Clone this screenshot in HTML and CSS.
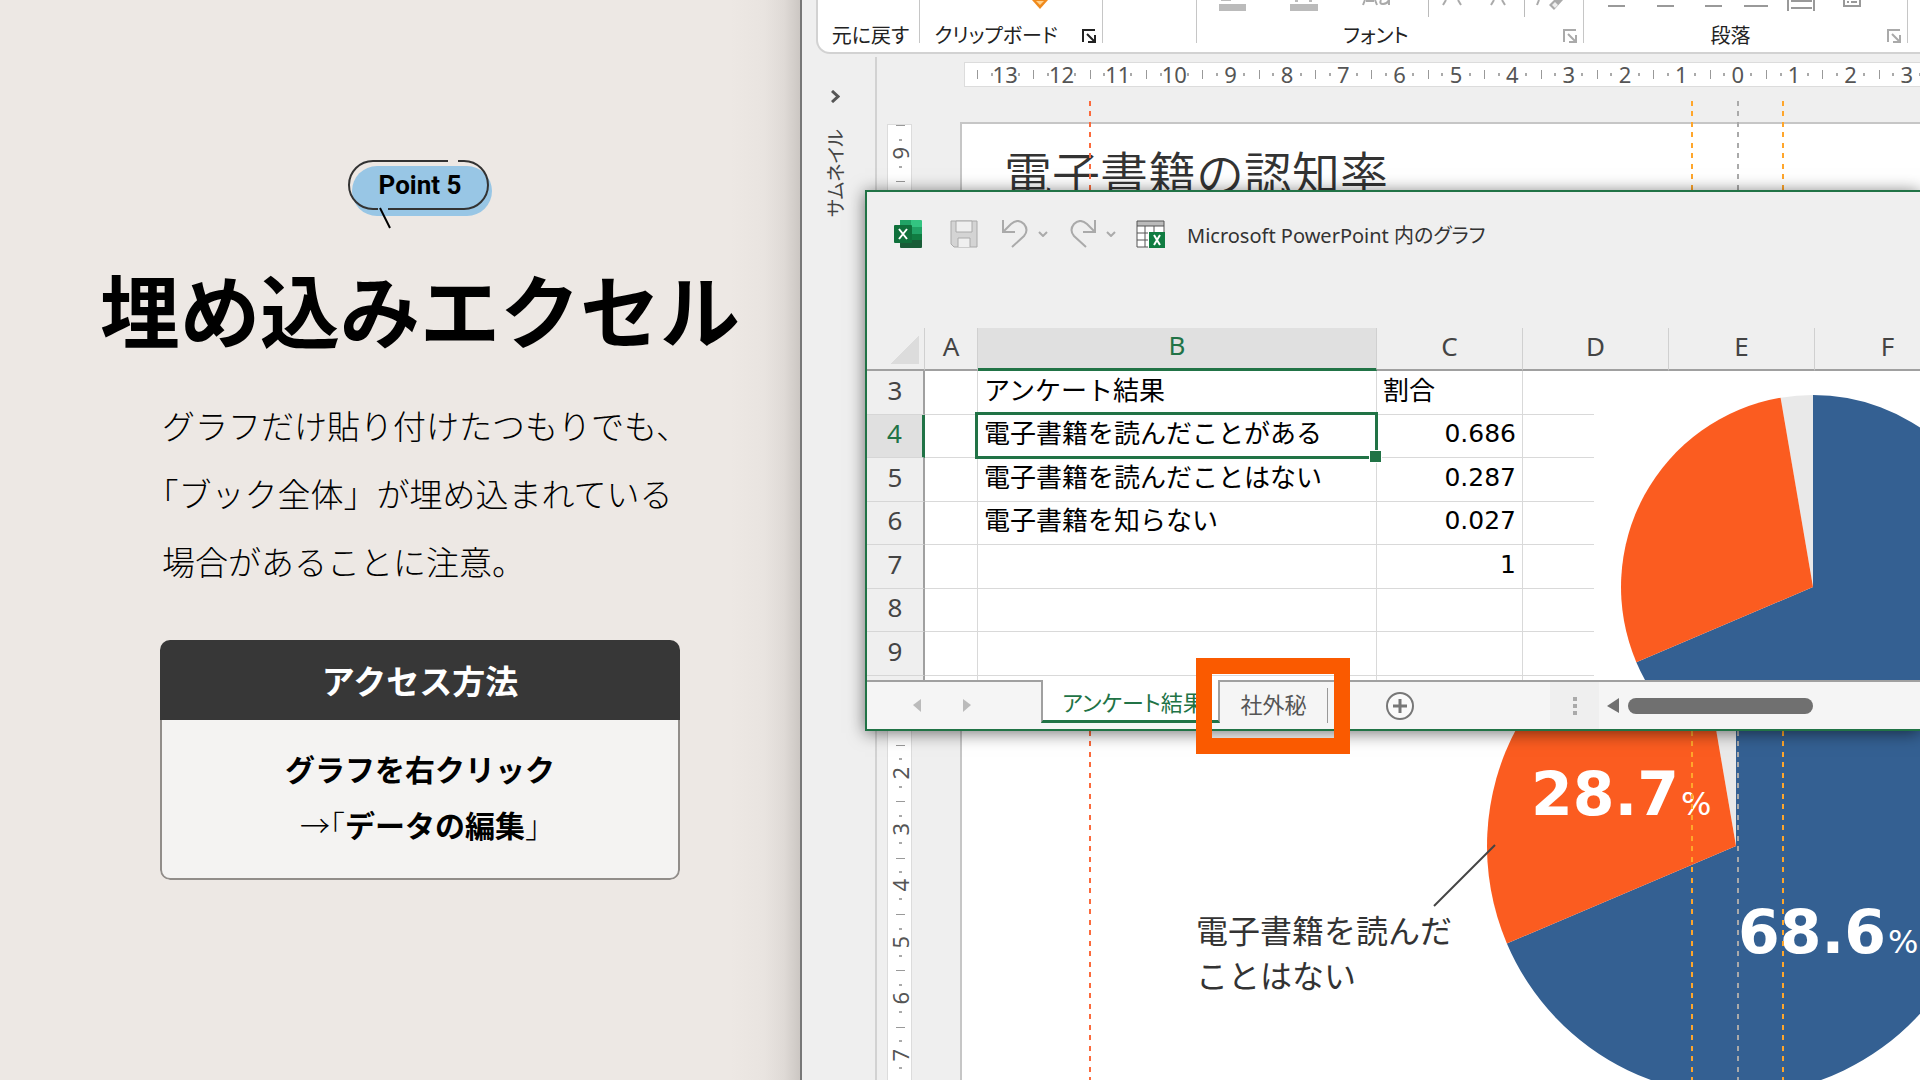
FILE: index.html
```html
<!DOCTYPE html>
<html lang="ja">
<head>
<meta charset="utf-8">
<title>埋め込みエクセル</title>
<meta name="viewport" content="width=device-width, initial-scale=1">
<link rel="stylesheet" href="styles.css">
</head>
<body>
<svg class="defs" width="0" height="0" aria-hidden="true">
  <symbol id="pie" viewBox="-100 -100 200 200">
    <path fill="#e9e9e9" d="M0 0L-16.88 -98.56A100 100 0 0 1 0 -100Z"/>
    <path fill="#346092" d="M0 0V-100A100 100 0 1 1 -92.02 39.14Z"/>
    <path fill="#fb5c20" d="M0 0L-92.02 39.14A100 100 0 0 1 -16.88 -98.56Z"/>
  </symbol>
  <symbol id="launcher" viewBox="0 0 14 14">
    <path fill="none" stroke="currentColor" stroke-width="2" d="M1 13V1H13M5 5L12 12M13 6V13H6"/>
  </symbol>
  <symbol id="chevron" viewBox="0 0 10 6">
    <path fill="none" stroke="currentColor" stroke-width="2" d="M1 1L5 5L9 1"/>
  </symbol>
</svg>
<main class="page">
  <section class="intro">
    <div class="badge">
      <svg class="badge-shape" viewBox="0 0 146 70" aria-hidden="true">
        <rect x="5" y="7" width="140" height="50" rx="25" fill="#98c6e5"/>
        <g fill="none" stroke="#333" stroke-width="2">
          <path d="M111 2H117A24 24 0 0 1 117 50H41M31 50H26A24 24 0 0 1 26 2H101"/>
          <path stroke="#000" d="M33 49L43 69"/>
        </g>
      </svg>
      <span class="badge-text">Point 5</span>
    </div>
    <h1>埋め込みエクセル</h1>
    <p class="lead">グラフだけ貼り付けたつもりでも、<br>「ブック全体」が埋め込まれている<br>場合があることに注意。</p>
    <section class="card">
      <h2>アクセス方法</h2>
      <p>グラフを右クリック<br><span class="thin">→「</span>データの編集<span class="thin">」</span></p>
    </section>
  </section>

  <section class="screen">
    <header class="ribbon">
      <div class="group undo"><span class="label">元に戻す</span></div>
      <div class="group clipboard">
        <svg class="tool" width="16" height="9" viewBox="0 0 16 9" aria-hidden="true"><path d="M0 0H16L8 9Z" fill="#f08a1c"/><path d="M4 1H12L8 5Z" fill="#ffd08a"/></svg>
        <span class="label">クリップボード</span>
        <button class="launch dark" aria-label="クリップボードの詳細"><svg width="14" height="14"><use href="#launcher"/></svg></button>
      </div>
      <div class="group slides"></div>
      <div class="group font">
        <svg class="tool" width="387" height="18" viewBox="0 0 387 18" aria-hidden="true">
          <g fill="#bbb"><path d="M22 4H49V11H22ZM93 4H121V11H93ZM231 0H232V17H231ZM327 0H328V17H327Z"/><path d="M24 0H34V1H24ZM98 0H101V2H98ZM112 0H115V2H112Z"/></g>
          <g fill="none" stroke="#aaa" stroke-width="2"><path d="M166 5L168 0M180 5L178 0M169 1H177M184 0Q182 4 186 4Q190 4 192 0M192 0V5M246 5L249 0M264 5L261 0M294 5L297 0M308 5L305 0M340 5L342 0"/></g>
          <path d="M352 5L360 -3L366 0L357 10Z" fill="#aaa"/><path d="M355 5L358 2L361 5L358 8Z" fill="#eee"/>
        </svg>
        <span class="label">フォント</span>
        <button class="launch" aria-label="フォントの詳細"><svg width="14" height="14"><use href="#launcher"/></svg></button>
      </div>
      <div class="group paragraph">
        <svg class="tool" width="300" height="12" viewBox="0 0 300 12" aria-hidden="true">
          <path fill="none" stroke="#999" stroke-width="2" d="M24 6H41M73 6H90M121 6H138M160 6H184M207 1H228M207 8H228M204 0V11M230 0V11M260 0V6H276V0M263 2H265M267 2H273"/>
        </svg>
        <span class="label">段落</span>
        <button class="launch" aria-label="段落の詳細"><svg width="14" height="14"><use href="#launcher"/></svg></button>
      </div>
      <div class="group rest"></div>
    </header>

    <div class="workspace">
      <aside class="rail">
        <svg width="9" height="13" viewBox="0 0 9 13" aria-hidden="true"><path d="M1 1L7 6.500L1 12" fill="none" stroke="#555" stroke-width="3"/></svg>
        <span class="rail-name">サムネイル</span>
      </aside>
      <div class="stage">
        <div class="ruler across">
          <span>13</span><span>12</span><span>11</span><span>10</span><span>9</span><span>8</span><span>7</span><span>6</span><span>5</span><span>4</span><span>3</span><span>2</span><span>1</span><span>0</span><span>1</span><span>2</span><span>3</span>
        </div>
        <div class="ruler down">
          <span><b>9</b></span><span><b>8</b></span><span><b>7</b></span><span><b>6</b></span><span><b>5</b></span><span><b>4</b></span><span><b>3</b></span><span><b>2</b></span><span><b>1</b></span><span><b>0</b></span><span><b>1</b></span><span><b>2</b></span><span><b>3</b></span><span><b>4</b></span><span><b>5</b></span><span><b>6</b></span><span><b>7</b></span>
        </div>
        <article class="slide">
          <h3>電子書籍の認知率</h3>
          <svg class="slide-pie" width="498" height="498" aria-hidden="true"><use href="#pie"/></svg>
          <svg class="leader" width="63" height="63" aria-hidden="true"><path d="M1 62L62 1" stroke="#444" stroke-width="2"/></svg>
          <p class="value no">28.7<small>%</small></p>
          <p class="value yes">68.6<small>%</small></p>
          <p class="caption">電子書籍を読んだ<br>ことはない</p>
        </article>
        <i class="guide margin"></i><i class="guide left"></i><i class="guide center"></i><i class="guide right"></i>
      </div>
    </div>

    <section class="excel">
      <header class="titlebar">
        <svg width="28" height="28" viewBox="0 0 28 28" aria-hidden="true">
          <path fill="#21a366" d="M6 0H17V8H6Z"/><path fill="#33c481" d="M17 0H27Q28 0 28 1V7H17Z"/>
          <path fill="#107c41" d="M6 7H17V20H6ZM17 14H28V21H17Z"/><path fill="#21a366" d="M17 7H28V14H17Z"/><path fill="#185c37" d="M6 20H28V27Q28 28 27 28H7Q6 28 6 27Z"/>
          <rect y="5" width="18" height="18" rx="1" fill="#0f703b"/>
          <path d="M5 9L13 19M13 9L5 19" stroke="#fff" stroke-width="2"/>
        </svg>
        <button class="tb save" aria-label="保存"><svg width="28" height="28" viewBox="0 0 28 28"><path fill="#d4d4d4" stroke="#aaa" stroke-width="1" d="M1 1H27V27H4L1 24Z"/><path fill="#efefef" stroke="#aaa" stroke-width="1" d="M6 1H22V12H6ZM8 27V18H20V27"/></svg></button>
        <button class="tb undo-btn" aria-label="元に戻す"><svg width="26" height="28" viewBox="0 0 26 28"><path fill="none" stroke="#aaa" stroke-width="2" d="M1 0V12H13M1 12L9 4Q16 -2 22 4Q27 10 22 16L10 27"/></svg></button>
        <button class="tb arrow" aria-label="元に戻す履歴"><svg width="10" height="6"><use href="#chevron"/></svg></button>
        <button class="tb redo-btn" aria-label="やり直し"><svg width="26" height="28" viewBox="0 0 26 28"><path fill="none" stroke="#aaa" stroke-width="2" d="M25 0V12H13M25 12L17 4Q10 -2 4 4Q-1 10 4 16L16 27"/></svg></button>
        <button class="tb arrow" aria-label="やり直し履歴"><svg width="10" height="6"><use href="#chevron"/></svg></button>
        <button class="tb data" aria-label="データの編集"><svg width="29" height="28" viewBox="0 0 29 28"><path fill="#fff" d="M1 1H28V27H1Z"/><path fill="#bbb" d="M1 1H28V6H1Z"/><path fill="none" stroke="#555" stroke-width="1" d="M12 27H1V1H28V12M1 6H28M1 13H12M1 20H12M9 6V27M18 6V12"/><path fill="#107c41" d="M13 12H29V28H13Z"/><path stroke="#fff" stroke-width="2" d="M18 15L24 25M24 15L18 25"/></svg></button>
        <span class="title">Microsoft PowerPoint 内のグラフ</span>
      </header>
      <div class="sheet">
        <table>
          <colgroup><col class="c-head"><col class="c-a"><col class="c-b"><col class="c-n"><col class="c-n"><col class="c-n"><col class="c-n"></colgroup>
          <thead><tr><th class="corner"></th><th>A</th><th class="on">B</th><th>C</th><th>D</th><th>E</th><th>F</th></tr></thead>
          <tbody>
            <tr><th>3</th><td></td><td>アンケート結果</td><td>割合</td><td></td><td></td><td></td></tr>
            <tr><th class="on">4</th><td></td><td class="selected">電子書籍を読んだことがある</td><td class="num">0.686</td><td></td><td></td><td></td></tr>
            <tr><th>5</th><td></td><td>電子書籍を読んだことはない</td><td class="num">0.287</td><td></td><td></td><td></td></tr>
            <tr><th>6</th><td></td><td>電子書籍を知らない</td><td class="num">0.027</td><td></td><td></td><td></td></tr>
            <tr><th>7</th><td></td><td></td><td class="num">1</td><td></td><td></td><td></td></tr>
            <tr><th>8</th><td></td><td></td><td></td><td></td><td></td><td></td></tr>
            <tr><th>9</th><td></td><td></td><td></td><td></td><td></td><td></td></tr>
            <tr><th></th><td></td><td></td><td></td><td></td><td></td><td></td></tr>
          </tbody>
        </table>
        <div class="chart"><svg width="384" height="384" aria-hidden="true"><use href="#pie"/></svg></div>
      </div>
      <footer class="tabs">
        <div class="nav">
          <button aria-label="前のシート"><svg width="8" height="13"><path d="M8 0V13L0 6Z" fill="#bbb"/></svg></button>
          <button aria-label="次のシート"><svg width="8" height="13"><path d="M0 0V13L8 6Z" fill="#bbb"/></svg></button>
        </div>
        <button class="tab active">アンケート結果</button>
        <div class="others">
          <button class="tab">社外秘</button>
          <button class="add" aria-label="新しいシート"><svg width="28" height="28" viewBox="0 0 28 28"><circle cx="14" cy="14" r="13" fill="#fafafa" stroke="#777" stroke-width="2"/><path d="M7 14H21M14 7V21" stroke="#777" stroke-width="3"/></svg></button>
          <div class="grip"><svg width="4" height="18"><path d="M0 0H4V4H0ZM0 7H4V11H0ZM0 14H4V18H0Z" fill="#aaa"/></svg></div>
          <div class="scroll"><svg width="12" height="15"><path d="M12 0V15L0 8Z" fill="#707070"/></svg><i></i></div>
        </div>
      </footer>
    </section>
    <div class="highlight"></div>
  </section>
</main>
</body>
</html>
```
FILE: styles.css
```css
* { box-sizing: border-box; }
body {
  margin: 0;
  font-family: "Noto Sans", "Noto Sans CJK JP", sans-serif;
  color: #000;
}
h1, h2, h3, p { margin: 0; }
button {
  display: flex;
  align-items: center;
  justify-content: center;
  border: 0;
  padding: 0;
  background: none;
  font: inherit;
  color: inherit;
}
svg { display: block; flex: none; }
.defs { position: absolute; }

.page {
  display: grid;
  grid-template-columns: minmax(0, 5fr) minmax(0, 7fr);
  height: 100vh;
  overflow: hidden;
}

/* Explanation column */
.intro {
  display: flex;
  flex-direction: column;
  align-items: center;
  padding-top: 159px;
  padding-right: 118px;
  padding-left: 158px;
  background: linear-gradient(to left, #ccc7c3, #dfdad6 16px, #e9e4e0 36px, #ede8e4 70px);
  font-family: "Noto Sans CJK JP", sans-serif;
}
.badge {
  position: relative;
  width: 146px;
  height: 70px;
}
.badge-shape { position: absolute; inset: 0; width: 100%; height: 100%; }
.badge-text {
  position: relative;
  display: block;
  font: bold 26px/52px "Liberation Sans Narrow", Roboto, sans-serif;
  text-align: center;
}
h1 {
  margin-top: 18px;
  font-size: 80px;
  line-height: 120px;
  font-weight: 700;
  white-space: nowrap;
}
.lead {
  width: 520px;
  margin-top: 24px;
  padding-left: 2px;
  font-size: 33px;
  line-height: 68px;
  font-weight: 300;
  white-space: nowrap;
  text-spacing-trim: trim-start;
}
.card {
  width: 520px;
  margin-top: 45px;
  border-radius: 10px;
  overflow: hidden;
  text-align: center;
  font-weight: 700;
}
.card h2 {
  background: #373737;
  color: #fff;
  font-size: 33px;
  line-height: 80px;
}
.card p {
  padding: 20px 0 26px;
  border: 2px solid #918d8a;
  border-top: 0;
  border-radius: 0 0 10px 10px;
  background: #f4f3f2;
  font-size: 30px;
  line-height: 56px;
}
.thin { font-weight: 300; font-feature-settings: "halt"; }

/* PowerPoint screen */
.screen {
  position: relative;
  display: flex;
  flex-direction: column;
  min-width: 0;
  overflow: hidden;
  border-left: 2px solid #777;
  background: #efefef;
}
.ribbon {
  display: flex;
  flex: none;
  height: 54px;
  margin-left: 14px;
  margin-right: -20px;
  border: 2px solid #d2d2d2;
  border-top: 0;
  border-bottom-left-radius: 14px;
  background: #fff;
  color: #222;
}
.group {
  position: relative;
  flex: none;
  height: 43px;
  border-right: 1px solid #c6c6c6;
}
.group.undo { width: 102px; }
.group.clipboard { width: 183px; }
.group.slides { width: 94px; }
.group.font { width: 387px; }
.group.paragraph { width: 324px; }
.group.rest { flex: 1; border: 0; }
.tool { position: absolute; top: 0; left: 0; }
.clipboard .tool { left: 112px; }
.label {
  display: block;
  padding-top: 20px;
  font: 20px/30px "Noto Sans CJK JP", sans-serif;
  font-feature-settings: "palt";
  text-align: center;
}
.undo .label { padding-left: 4px; }
.clipboard .label { padding-right: 30px; }
.font .label { padding-right: 28px; }
.paragraph .label { padding-right: 30px; }
.launch { position: absolute; right: 6px; bottom: 0; color: #aaa; }
.launch.dark { color: #222; }

.workspace { display: flex; flex: 1; min-height: 0; }
.rail {
  display: flex;
  flex: none;
  flex-direction: column;
  align-items: center;
  gap: 26px;
  width: 75px;
  margin-top: 3px;
  padding: 33px 7px 0 0;
  border-right: 2px solid #d2d2d2;
}
.rail-name {
  font: 19px/24px "Noto Sans CJK JP", sans-serif;
  font-feature-settings: "palt";
  color: #444;
  writing-mode: vertical-rl;
  text-orientation: sideways;
  transform: rotate(180deg);
}
.stage {
  position: relative;
  display: grid;
  flex: 1;
  grid-template-columns: 25px minmax(0, 1fr);
  grid-template-rows: 25px minmax(0, 1fr);
  gap: 35px 48px;
  min-width: 0;
  padding: 8px 0 0 10px;
  overflow: hidden;
}
.ruler {
  display: grid;
  border: 1px solid #dcdcdc;
  background: #fff;
  font-size: 22px;
  color: #555;
}
.ruler span {
  display: flex;
  align-items: center;
  justify-content: center;
  background-image: linear-gradient(#999, #999), linear-gradient(#aaa, #aaa), linear-gradient(#aaa, #aaa);
  background-repeat: no-repeat;
}
.ruler b { font-weight: 400; line-height: 24px; writing-mode: vertical-rl; transform: rotate(180deg); }
.across {
  grid-column: 2;
  grid-template-columns: repeat(17, 1fr);
  margin-left: 4px;
  margin-right: -16px;
  padding-left: 12px;
  line-height: 23px;
}
.across span {
  background-size: 1px 9px, 2px 3px, 2px 3px;
  background-position: left center, 25% center, 75% center;
}
.down {
  grid-template-rows: repeat(17, 1fr);
  margin-top: 2px;
  margin-bottom: -4px;
}
.down span {
  min-height: 0;
  background-size: 9px 1px, 3px 2px, 3px 2px;
  background-position: center top, center 25%, center 75%;
}
.slide {
  position: relative;
  padding: 17px 0 0 42px;
  border: solid #c6c6c6;
  border-width: 2px 0 0 2px;
  background: #fff;
  overflow: hidden;
  color: #333;
}
.slide h3 {
  font: 48px/60px "Noto Sans CJK JP", sans-serif;
  font-weight: 350;
}
.slide-pie { position: absolute; left: 525px; top: 473px; }
.leader { position: absolute; left: 471px; top: 720px; }
.value {
  position: absolute;
  font: bold 60px/64px "DejaVu Sans", sans-serif;
  color: #fff;
  white-space: nowrap;
}
.value small { margin-left: 2px; font: 32px/32px "DejaVu Sans", sans-serif; }
.value.no { left: 569px; top: 638px; }
.value.yes { left: 776px; top: 776px; }
.caption {
  position: absolute;
  left: 234px;
  top: 783px;
  font: 32px/45px "Noto Sans CJK JP", sans-serif;
}
.guide {
  position: absolute;
  top: 47px;
  bottom: 0;
  width: 2px;
  color: #ffa62b;
  background: repeating-linear-gradient(currentColor 0 5px, transparent 5px 10px, currentColor 10px 15px, transparent 15px 21px);
}
.guide.margin { left: 212px; color: #fb6a3c; }
.guide.left { left: 814px; }
.guide.center { left: 860px; color: #aaa; }
.guide.right { left: 905px; }

/* Embedded workbook window */
.excel {
  position: absolute;
  top: 190px;
  left: 63px;
  right: 0;
  border: 2px solid #217346;
  border-right: 0;
  background: #efefef;
  box-shadow: 0 2px 16px rgba(0, 0, 0, 0.55);
}
.titlebar {
  display: flex;
  align-items: center;
  height: 84px;
  margin-bottom: 52px;
  padding-left: 27px;
}
.tb { flex: none; color: #aaa; }
.save { margin-left: 28px; }
.undo-btn { margin-left: 24px; }
.arrow { margin-left: 10px; }
.redo-btn { margin-left: 22px; }
.data { margin-left: 20px; }
.title {
  margin-left: 22px;
  font-size: 20px;
  font-feature-settings: "palt";
  color: #333;
  white-space: nowrap;
}
.sheet {
  position: relative;
  height: 352px;
  overflow: hidden;
}
table {
  width: 1094px;
  table-layout: fixed;
  border-collapse: separate;
  border-spacing: 0;
}
.c-head { width: 58px; }
.c-a { width: 53px; }
.c-b { width: 399px; }
.c-n { width: 146px; }
th {
  height: 43px;
  padding: 0 0 6px;
  font-size: 26px;
  line-height: 30px;
  font-weight: 400;
  color: #444;
}
thead th {
  border-right: 1px solid #d0d0d0;
  border-bottom: 2px solid #a0a0a0;
}
thead .on { background: #e0e0e0; border-bottom: 3px solid #217346; color: #217346; }
.corner { background: linear-gradient(135deg, transparent 50%, #dcdcdc 50%) 23px 8px / 29px 28px no-repeat; }
tbody th {
  border-right: 2px solid #a0a0a0;
  border-bottom: 1px solid #d6d6d6;
}
tbody .on { background: #e0e0e0; border-right: 3px solid #217346; color: #217346; }
td {
  height: 44px;
  padding: 0 6px 8px;
  border-right: 1px solid #d9d9d9;
  border-bottom: 1px solid #d9d9d9;
  background: #fff;
  font: 26px/32px "Noto Sans CJK JP", sans-serif;
  white-space: nowrap;
}
tbody tr:nth-child(even) td { height: 43px; }
.num { padding-bottom: 4px; font: 25px/32px "DejaVu Sans", sans-serif; text-align: right; }
.selected { position: relative; }
.selected::before {
  content: "";
  position: absolute;
  inset: -3px -2px -2px -3px;
  border: 3px solid #217346;
}
.selected::after {
  content: "";
  position: absolute;
  right: -6px;
  bottom: -6px;
  width: 11px;
  height: 11px;
  border: 1px solid #fff;
  background: #217346;
}
.chart {
  position: absolute;
  top: 43px;
  right: 0;
  bottom: 0;
  left: 727px;
  padding: 24px 0 0 27px;
  overflow: hidden;
  background: #fff;
}
.tabs {
  display: flex;
  height: 49px;
  background: #f5f5f5;
  font: 22px/30px "Noto Sans CJK JP", sans-serif;
  font-feature-settings: "palt";
}
.nav {
  display: flex;
  gap: 42px;
  width: 174px;
  padding-left: 46px;
  border-top: 2px solid #a0a0a0;
}
.tab { height: 43px; color: #555; }
.tab.active {
  width: 179px;
  padding: 2px 0 0 6px;
  border: solid;
  border-width: 0 2px 3px;
  border-color: #217346 #a0a0a0;
  background: #fff;
  color: #217346;
}
.others {
  display: flex;
  flex: 1;
  align-items: center;
  min-width: 0;
  border-top: 2px solid #a0a0a0;
}
.others .tab {
  width: 108px;
  height: 35px;
  padding-bottom: 6px;
  border-right: 1px solid #999;
}
.add { margin-left: 58px; }
.grip {
  display: flex;
  align-items: center;
  justify-content: center;
  align-self: stretch;
  width: 49px;
  margin-left: 136px;
  background: #efefef;
}
.scroll { display: flex; align-items: center; gap: 9px; padding-left: 8px; }
.scroll i { width: 185px; height: 16px; border-radius: 8px; background: #707070; }
.highlight {
  position: absolute;
  top: 658px;
  left: 394px;
  width: 154px;
  height: 96px;
  border: 16px solid #fa5a00;
}
```
